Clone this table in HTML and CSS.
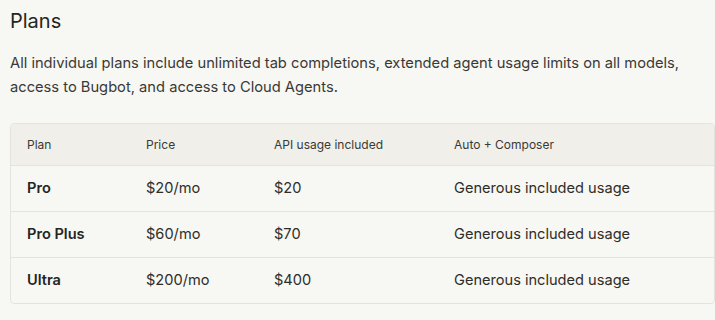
FILE: index.html
```html
<!DOCTYPE html>
<html lang="en">
<head>
  <meta charset="UTF-8" />
  <title>Plans</title>
  <link rel="stylesheet" href="styles.css">
</head>
<body>
  <section class="plans">
    <h2>Plans</h2>
    <p class="intro">All individual plans include unlimited tab completions, extended agent usage limits on all models, access to Bugbot, and access to Cloud Agents.</p>

    <div class="table-wrap">
      <table class="plan-table">
        <thead>
          <tr>
            <th class="col-plan">Plan</th>
            <th class="col-price">Price</th>
            <th class="col-api">API usage included</th>
            <th>Auto + Composer</th>
          </tr>
        </thead>
        <tbody>
          <tr>
            <td class="name">Pro</td>
            <td>$20/mo</td>
            <td>$20</td>
            <td>Generous included usage</td>
          </tr>
          <tr>
            <td class="name">Pro Plus</td>
            <td>$60/mo</td>
            <td>$70</td>
            <td>Generous included usage</td>
          </tr>
          <tr>
            <td class="name">Ultra</td>
            <td>$200/mo</td>
            <td>$400</td>
            <td>Generous included usage</td>
          </tr>
        </tbody>
      </table>
    </div>
  </section>
</body>
</html>
```

FILE: styles.css
```css
* {
  box-sizing: border-box;
}

body {
  margin: 0;
  background: #f7f7f4;
  color: #26251e;
  font-family: Inter, "Noto Sans", sans-serif;
}

.plans {
  padding: 7px 0 0 10px;
}

.plans h2 {
  margin: 0;
  font-size: 20px;
  line-height: 28px;
  font-weight: 400;
}

.intro {
  margin: 16px 0 0;
  font-size: 14.7px;
  line-height: 24px;
  color: #3a3934;
}

.table-wrap {
  margin-top: 24px;
  border: 1px solid #e4e3dd;
  border-radius: 4px;
  overflow: hidden;
}

.plan-table {
  width: 100%;
  border-collapse: collapse;
}

.plan-table th,
.plan-table td {
  text-align: left;
  padding: 0 16px;
}

.plan-table th {
  background: #f0efea;
  height: 41px;
  font-size: 12px;
  font-weight: 400;
  color: #3a3934;
  border-bottom: 1px solid #e4e3dd;
}

.plan-table td {
  height: 46px;
  font-size: 14.6px;
  color: #2e2d28;
}

.plan-table tbody tr + tr td {
  border-top: 1px solid #e4e3dd;
}

.plan-table .name {
  font-weight: 600;
  color: #26251e;
}

.col-plan { width: 119px; }
.col-price { width: 128px; }
.col-api { width: 180px; }
```
